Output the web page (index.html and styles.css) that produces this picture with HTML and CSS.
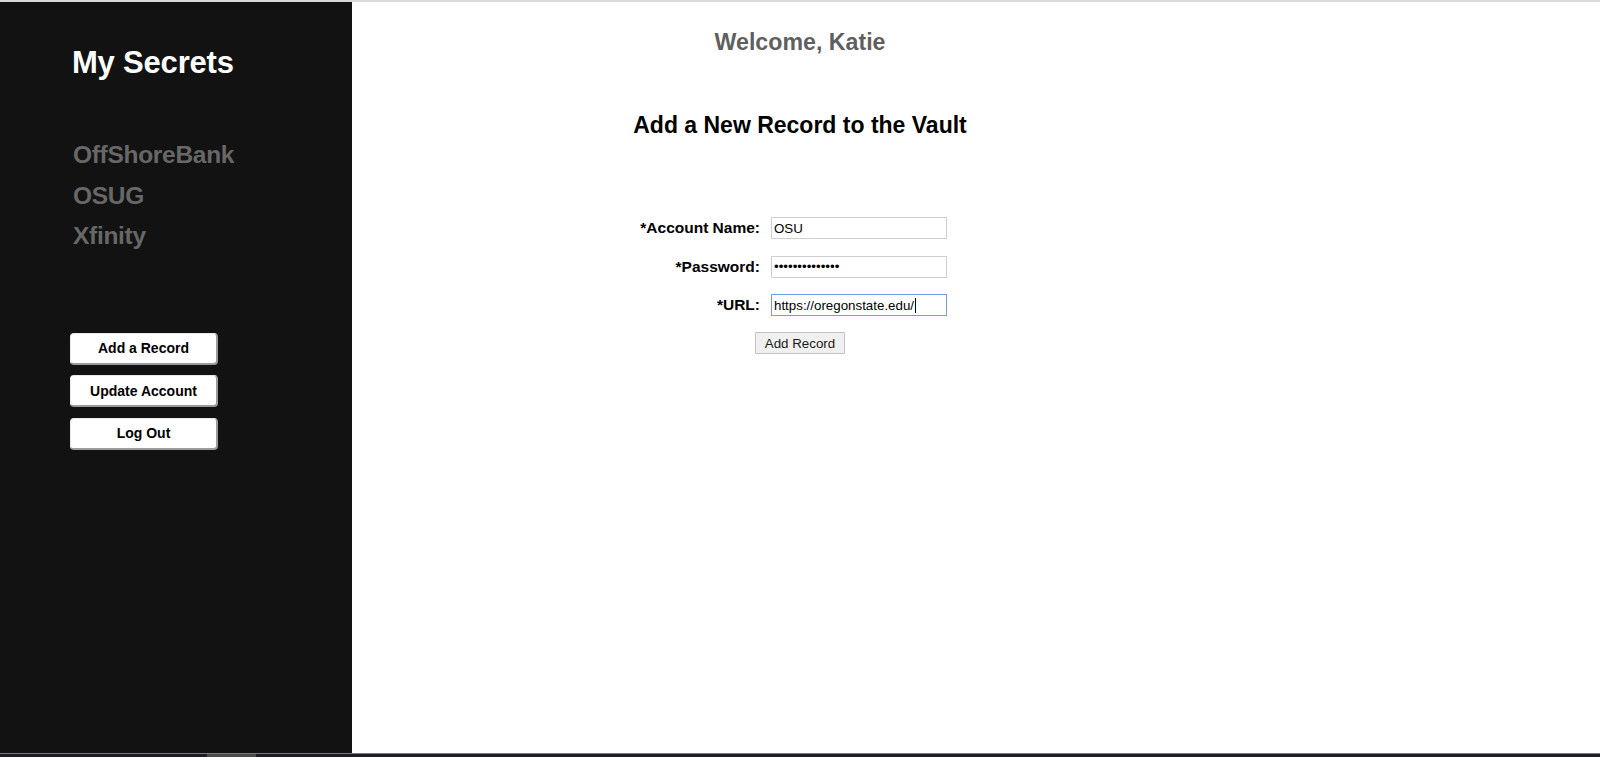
FILE: index.html
```html
<!DOCTYPE html>
<html lang="en">
<head>
<meta charset="utf-8">
<title>My Secrets</title>
<link rel="stylesheet" href="styles.css">
</head>
<body>
<div class="topline"></div>
<div class="app">
  <aside class="sidebar">
    <h1 class="brand">My Secrets</h1>
    <nav class="records">
      <a class="record-link" href="#">OffShoreBank</a>
      <a class="record-link" href="#">OSUG</a>
      <a class="record-link" href="#">Xfinity</a>
    </nav>
    <div class="actions">
      <button class="side-btn" type="button">Add a Record</button>
      <button class="side-btn" type="button">Update Account</button>
      <button class="side-btn" type="button">Log Out</button>
    </div>
  </aside>
  <main class="main">
    <div class="welcome">Welcome, Katie</div>
    <h2 class="title">Add a New Record to the Vault</h2>
    <form class="record-form">
      <label class="lbl" for="acct">*Account Name:</label>
      <div class="field"><input class="inp" id="acct" type="text" value="OSU"></div>
      <label class="lbl" for="pw">*Password:</label>
      <div class="field"><input class="inp" id="pw" type="password" value="abcdefghijklmn"></div>
      <label class="lbl" for="url">*URL:</label>
      <div class="field"><span class="inp inp-focus">https://oregonstate.edu/<span class="caret"></span></span></div>
      <div class="submit-row"><button class="submit" type="button">Add Record</button></div>
    </form>
  </main>
</div>
<div class="bottombar"><div class="thumb"></div></div>
</body>
</html>
```

FILE: styles.css
```css
html, body {
  margin: 0;
  padding: 0;
  height: 757px;
  overflow: hidden;
  background: #ffffff;
}

body {
  display: flex;
  flex-direction: column;
  font-family: "Liberation Sans", Arial, sans-serif;
}

.topline {
  height: 2px;
  background: #d9d9d9;
  flex: none;
}

.app {
  flex: 1;
  display: flex;
  min-height: 0;
}

.sidebar {
  width: 352px;
  flex: none;
  background: #121212;
  padding: 43px 0 0 70px;
  box-sizing: border-box;
  display: flex;
  flex-direction: column;
}

.brand {
  margin: 0;
  color: #ffffff;
  font-size: 31px;
  line-height: 36px;
  font-weight: bold;
  letter-spacing: -0.2px;
  padding-left: 2px;
}

.records {
  display: flex;
  flex-direction: column;
  margin-top: 54px;
  padding-left: 3px;
}

.record-link {
  color: #676767;
  text-decoration: none;
  font-size: 24.5px;
  line-height: 40.5px;
  font-weight: bold;
  letter-spacing: -0.3px;
}

.actions {
  display: flex;
  flex-direction: column;
  gap: 10.5px;
  margin-top: 76px;
}

.side-btn {
  width: 148px;
  height: 32px;
  background: #ffffff;
  border-top: 1px solid #e8e8e8;
  border-left: 1px solid #e8e8e8;
  border-right: 2px solid #9a9a9a;
  border-bottom: 2px solid #9a9a9a;
  border-radius: 4px;
  font-family: "Liberation Sans", Arial, sans-serif;
  font-weight: bold;
  font-size: 14px;
  color: #000000;
  padding: 0;
}

.main {
  flex: 1;
  display: flex;
  flex-direction: column;
  align-items: center;
  padding: 26px 352px 0 0;
  box-sizing: border-box;
}

.welcome {
  color: #5f5f5f;
  font-size: 23.2px;
  line-height: 28px;
  font-weight: bold;
}

.title {
  margin: 55px 0 0 0;
  color: #000000;
  font-size: 23px;
  line-height: 28px;
  font-weight: bold;
}

.record-form {
  margin-top: 78px;
  display: grid;
  grid-template-columns: 125px 194px;
  column-gap: 11px;
  row-gap: 16.5px;
  grid-auto-rows: 22px;
  align-items: center;
}

.lbl {
  text-align: right;
  font-weight: bold;
  font-size: 15.5px;
  color: #000000;
  white-space: nowrap;
}

.field {
  display: flex;
}

.inp {
  width: 176px;
  height: 22px;
  box-sizing: border-box;
  border: 1px solid #cfcfcf;
  padding: 0 2px;
  font-family: "Liberation Sans", Arial, sans-serif;
  font-size: 13.33px;
  color: #000000;
  background: #ffffff;
  margin: 0;
  outline: none;
}

.inp-focus {
  display: flex;
  align-items: center;
  border-color: #6d9eea;
}

.caret {
  display: inline-block;
  width: 1px;
  height: 15px;
  background: #000000;
  margin-left: 1px;
}

.submit-row {
  grid-column: 1 / 3;
  display: flex;
  justify-content: center;
  margin-top: -0.5px;
}

.submit {
  width: 90px;
  height: 22px;
  padding: 0;
  background: #f0f0f0;
  border: 1px solid #c3c3c3;
  border-radius: 1px;
  font-family: "Liberation Sans", Arial, sans-serif;
  font-size: 13.33px;
  color: #1a1a1a;
}

.bottombar {
  height: 4px;
  flex: none;
  background: #1d1e27;
  border-top: 1px solid #7a7a7a;
  box-sizing: border-box;
  display: flex;
}

.thumb {
  margin-left: 207px;
  width: 49px;
  background: #4c4c4c;
}
```
